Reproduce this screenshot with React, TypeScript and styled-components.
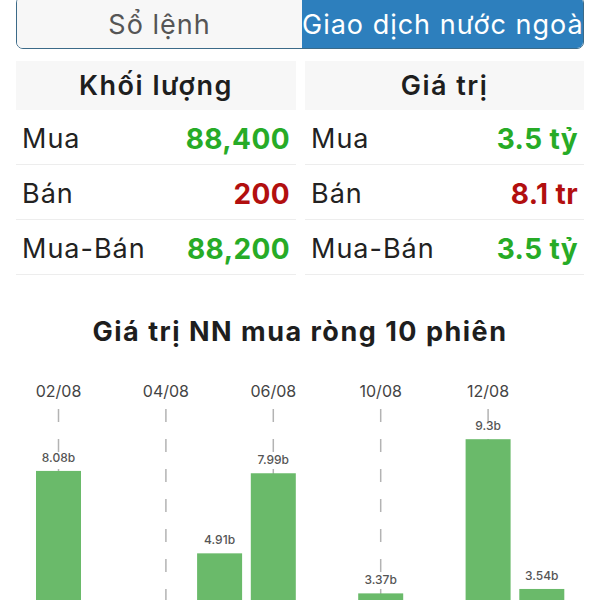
import React from "react";
import styled, { createGlobalStyle } from "styled-components";

const GlobalStyle = createGlobalStyle`
  html, body { margin: 0; padding: 0; background: #ffffff; }
  body { font-family: Inter, "Noto Sans", "DejaVu Sans", sans-serif; }
`;

const Page = styled.div`
  width: 600px;
  height: 600px;
  overflow: hidden;
  background: #ffffff;
  display: flex;
  flex-direction: column;
`;

const Segmented = styled.div`
  margin: -4px 16px 0;
  height: 51px;
  border: 1px solid #3b6a88;
  border-radius: 7px;
  display: grid;
  grid-template-columns: 285px 1fr;
  overflow: hidden;
  flex-shrink: 0;
`;

const Segment = styled.div<{ $active?: boolean }>`
  display: flex;
  align-items: center;
  justify-content: ${(p) => (p.$active ? "flex-start" : "center")};
  padding-top: 4px;
  overflow: hidden;
  white-space: nowrap;
  font-size: 27px;
  letter-spacing: 1px;
  font-weight: 400;
  background: ${(p) => (p.$active ? "#2d7fbd" : "#f7f7f7")};
  color: ${(p) => (p.$active ? "#ffffff" : "#555555")};
`;

const Tables = styled.div`
  margin: 12px 16px 0;
  display: grid;
  grid-template-columns: 280px 1fr;
  column-gap: 9px;
  flex-shrink: 0;
`;

const Column = styled.div`
  display: flex;
  flex-direction: column;
`;

const Header = styled.div`
  height: 49px;
  background: #f7f7f7;
  display: flex;
  align-items: center;
  justify-content: center;
  font-size: 27px;
  letter-spacing: 1.5px;
  font-weight: 600;
  color: #1e1e1e;
`;

const Row = styled.div`
  height: 54px;
  border-bottom: 1px solid #ededed;
  display: flex;
  align-items: center;
  justify-content: space-between;
  padding: 3px 6px 0;
  box-sizing: border-box;
  height: 55px;
`;

const Label = styled.span`
  font-size: 27px;
  letter-spacing: 1px;
  font-weight: 400;
  color: #222222;
`;

const Value = styled.span<{ $tone: "up" | "down" }>`
  font-size: 28px;
  letter-spacing: 0.4px;
  font-weight: 700;
  color: ${(p) => (p.$tone === "up" ? "#27ab27" : "#b20f0f")};
`;

const Title = styled.div`
  margin-top: 37px;
  height: 38px;
  display: flex;
  align-items: center;
  justify-content: center;
  font-size: 27px;
  letter-spacing: 1.5px;
  font-weight: 700;
  color: #1e1e1e;
  flex-shrink: 0;
`;

const ChartBox = styled.div`
  margin-top: 16px;
  flex: 1;
  overflow: hidden;
`;

type RowData = { label: string; value: string; tone: "up" | "down" };

const volumeRows: RowData[] = [
  { label: "Mua", value: "88,400", tone: "up" },
  { label: "Bán", value: "200", tone: "down" },
  { label: "Mua-Bán", value: "88,200", tone: "up" },
];

const valueRows: RowData[] = [
  { label: "Mua", value: "3.5 tỷ", tone: "up" },
  { label: "Bán", value: "8.1 tr", tone: "down" },
  { label: "Mua-Bán", value: "3.5 tỷ", tone: "up" },
];

const sessions = [
  { date: "02/08", v: 8.08 },
  { date: "03/08", v: -2.4 },
  { date: "04/08", v: -5.1 },
  { date: "05/08", v: 4.91 },
  { date: "06/08", v: 7.99 },
  { date: "09/08", v: -1.6 },
  { date: "10/08", v: 3.37 },
  { date: "11/08", v: -0.9 },
  { date: "12/08", v: 9.3 },
  { date: "13/08", v: 3.54 },
];

const Chart: React.FC = () => {
  const top = 367;
  const baseline = 682 - top;
  const scale = 26;
  const step = 53.7;
  const x0 = 58.5;
  const bw = 45;
  return (
    <svg width="600" height="240" viewBox="0 0 600 240">
      {sessions.map((s, i) =>
        i % 2 === 0 ? (
          <g key={"l" + i}>
            <text
              x={x0 + i * step}
              y={392 - top + 6}
              textAnchor="middle"
              fontSize="16"
              fill="#444"
              fontFamily="Inter, sans-serif"
            >
              {s.date}
            </text>
            <line
              x1={x0 + i * step}
              x2={x0 + i * step}
              y1={410 - top}
              y2={240}
              stroke="#b3b3b3"
              strokeWidth="1.5"
              strokeDasharray="13 17"
            />
          </g>
        ) : null
      )}
      {sessions.map((s, i) => {
        const cx = x0 + i * step;
        const h = Math.abs(s.v) * scale;
        const y = s.v >= 0 ? baseline - h : baseline;
        return (
          <g key={"b" + i}>
            <rect x={cx - bw / 2} y={y} width={bw} height={h} fill="#6aba6a" />
            <text
              x={cx}
              y={s.v >= 0 ? y - 9 : y + h + 16}
              textAnchor="middle"
              fontSize="12"
              fontWeight="500"
              fill="#555"
              fontFamily="Inter, sans-serif"
            >
              {Math.abs(s.v)}b
            </text>
          </g>
        );
      })}
    </svg>
  );
};

const Table: React.FC<{ title: string; rows: RowData[] }> = ({ title, rows }) => (
  <Column>
    <Header>{title}</Header>
    {rows.map((r) => (
      <Row key={r.label}>
        <Label>{r.label}</Label>
        <Value $tone={r.tone}>{r.value}</Value>
      </Row>
    ))}
  </Column>
);

export default function App() {
  return (
    <>
      <GlobalStyle />
      <Page>
        <Segmented>
          <Segment>Sổ lệnh</Segment>
          <Segment $active>Giao dịch nước ngoài</Segment>
        </Segmented>
        <Tables>
          <Table title="Khối lượng" rows={volumeRows} />
          <Table title="Giá trị" rows={valueRows} />
        </Tables>
        <Title>Giá trị NN mua ròng 10 phiên</Title>
        <ChartBox>
          <Chart />
        </ChartBox>
      </Page>
    </>
  );
}
